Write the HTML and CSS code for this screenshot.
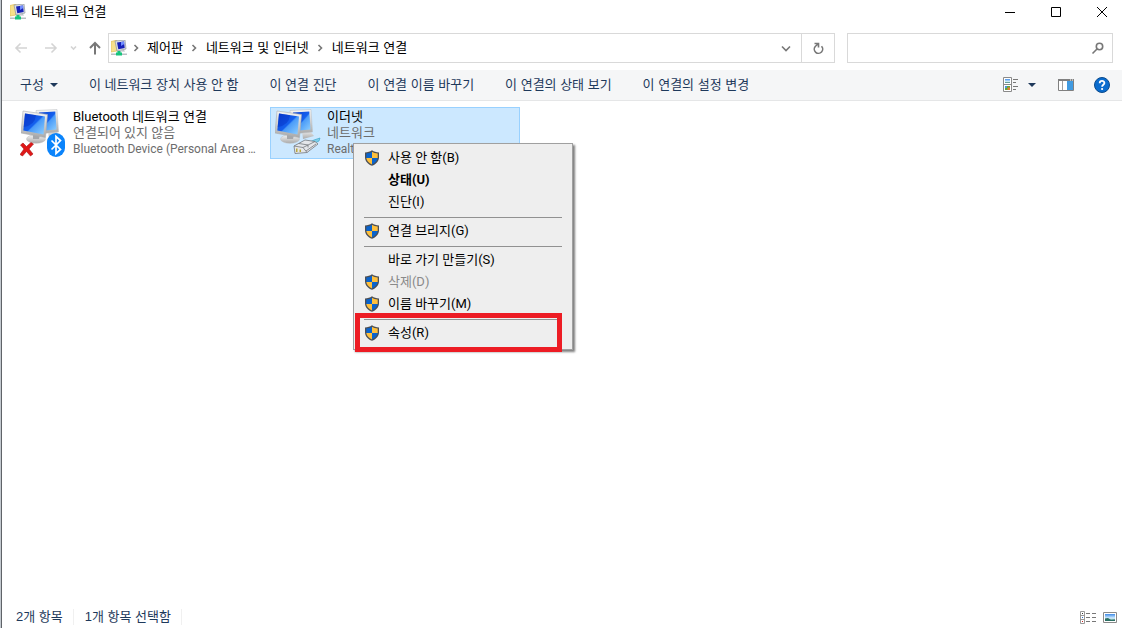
FILE: index.html
```html
<!DOCTYPE html>
<html lang="ko">

<head>
  <meta charset="UTF-8">
  <meta name="viewport" content="width=device-width, initial-scale=1.0">
  <title>네트워크 연결</title>
  <link rel="stylesheet" href="styles.css">
</head>

<body>
  <!-- shared icons -->
  <svg class="defs" aria-hidden="true">
    <defs>
      <linearGradient id="screen" x1="0" y1="0" x2="1" y2="1">
        <stop offset="0" stop-color="#0a3fd0" />
        <stop offset="0.5" stop-color="#1560ee" />
        <stop offset="0.55" stop-color="#4a9bf8" />
        <stop offset="1" stop-color="#8fd0ff" />
      </linearGradient>
      <linearGradient id="metal" x1="0" y1="0" x2="0" y2="1">
        <stop offset="0" stop-color="#f6f6f6" />
        <stop offset="1" stop-color="#a9a9a9" />
      </linearGradient>
      <linearGradient id="sky" x1="0" y1="0" x2="0" y2="1">
        <stop offset="0" stop-color="#3f8be8" />
        <stop offset="0.6" stop-color="#d8f0ff" />
        <stop offset="1" stop-color="#2d7a6a" />
      </linearGradient>
      <symbol id="shield" viewBox="0 0 16 16">
        <path d="M8 .3C6 1.8 3.800 2.300 1 2.500V7.500C1.200 11.500 4 14.200 8 15.800C12 14.200 14.800 11.500 15 7.500V2.500C12.200 2.300 10 1.800 8 .3Z" fill="#4c4f54" />
        <path d="M8 1.800C6.300 2.900 4.500 3.400 2.300 3.600V8H8Z" fill="#0a63cc" />
        <path d="M8 1.800C9.700 2.900 11.500 3.400 13.700 3.600V8H8Z" fill="#ffc03c" />
        <path d="M2.300 8C2.700 11 4.800 13.100 8 14.500V8Z" fill="#ffc03c" />
        <path d="M13.700 8C13.300 11 11.200 13.100 8 14.500V8Z" fill="#0a63cc" />
      </symbol>
      <symbol id="net" viewBox="0 0 16 16">
        <path d="M0 1.500L6 0V11L0 12Z" fill="#f7e08a" stroke="#dcb84c" stroke-width=".6" />
        <path d="M4 1L14 0L15 9L6 11Z" fill="#dcdfe4" stroke="#8d939c" stroke-width=".7" />
        <path d="M6 2.500L13 1.500L13.700 8L7.300 9.200Z" fill="#1620b8" />
        <path d="M10 2L13 1.500L13.300 4L10 6Z" fill="#6f8cff" />
        <path d="M6 11L13 10L14 11.500H6Z" fill="#b7bbc2" />
        <path d="M0 13.500H16V15H0Z" fill="#b9bfc4" />
        <path d="M6.500 11H9.500V12.500H11V15.500H5V12.500H6.500Z" fill="#16c47c" />
      </symbol>
      <symbol id="monitors" viewBox="0 0 40 36">
        <path d="M27 22L34 21L39 27L28 30Z" fill="url(#metal)" />
        <path d="M15 1.500L36 .5L37.500 23L17 25Z" fill="url(#metal)" stroke="#b9bcc0" stroke-width=".5" />
        <path d="M18 3.500L34.300 2.500L35.500 20.500L19 22Z" fill="url(#screen)" />
        <path d="M12 24L22 25V30H13Z" fill="#b8babd" />
        <ellipse cx="15" cy="30" rx="9.500" ry="4.300" fill="url(#metal)" stroke="#bdbdbd" stroke-width=".5" />
        <path d="M12 25L19 26L18 30H12Z" fill="#a5a7aa" />
        <path d="M2 2L26.500 5.500L24.500 28.500L0 24Z" fill="url(#metal)" stroke="#a9acb0" stroke-width=".6" />
        <path d="M4 4.500L24 7.500L22.500 25.500L2.300 21.500Z" fill="url(#screen)" />
        <path d="M4 4.500L15 6.200Q14 16 2.700 18Z" fill="#0634c8" opacity=".5" />
      </symbol>
      <symbol id="crumb" viewBox="0 0 6 8">
        <path d="M1.500 1L4.500 4L1.500 7" fill="none" stroke="#777" stroke-width="1.600" />
      </symbol>
    </defs>
  </svg>

  <div class="window">
    <header class="titlebar">
      <svg class="icon"><use href="#net" /></svg>
      <h1>네트워크 연결</h1>
      <div class="caption-buttons">
        <button type="button" aria-label="최소화">
          <svg viewBox="0 0 12 12"><path d="M1 6.500H11" /></svg>
        </button>
        <button type="button" aria-label="최대화">
          <svg viewBox="0 0 12 12"><path d="M1.500 1.500H10.500V10.500H1.500Z" /></svg>
        </button>
        <button type="button" aria-label="닫기">
          <svg viewBox="0 0 12 12"><path d="M1 1L11 11M11 1L1 11" /></svg>
        </button>
      </div>
    </header>

    <nav class="navbar">
      <div class="history">
        <button type="button" aria-label="뒤로" disabled>
          <svg viewBox="0 0 14 14"><path d="M13 7H2M6.500 2.500L2 7L6.500 11.500" /></svg>
        </button>
        <button type="button" aria-label="앞으로" disabled>
          <svg viewBox="0 0 14 14"><path d="M1 7H12M7.500 2.500L12 7L7.500 11.500" /></svg>
        </button>
        <button type="button" class="recent" aria-label="최근 위치" disabled>
          <svg viewBox="0 0 14 14"><path d="M5 5.500L7.500 8L10 5.500" /></svg>
        </button>
        <button type="button" class="up" aria-label="위로">
          <svg viewBox="0 0 14 14"><path d="M7 13.500V2.500M2 7L7 2L12 7" /></svg>
        </button>
      </div>
      <div class="address">
        <svg class="icon"><use href="#net" /></svg>
        <svg class="crumb"><use href="#crumb" /></svg>
        <a href="#">제어판</a>
        <svg class="crumb"><use href="#crumb" /></svg>
        <a href="#">네트워크 및 인터넷</a>
        <svg class="crumb"><use href="#crumb" /></svg>
        <a href="#">네트워크 연결</a>
        <button type="button" class="drop" aria-label="이전 위치">
          <svg viewBox="0 0 14 14"><path d="M3 5.500L7 9.500L11 5.500" /></svg>
        </button>
        <button type="button" class="refresh" aria-label="새로 고침">
          <svg viewBox="0 0 14 14"><path d="M4.200 5.500A4.200 4.200 0 1 0 10.500 5.200M3.500 2.500H7.500V6.500M7.500 2.500L4.200 5.500" /></svg>
        </button>
      </div>
      <label class="search">
        <input type="text" aria-label="검색">
        <svg viewBox="0 0 14 14"><circle cx="8.500" cy="5.500" r="3.200" /><path d="M6 8L1.500 12.500" /></svg>
      </label>
    </nav>

    <div class="toolbar">
      <button type="button">구성 <svg class="caret" viewBox="0 0 8 4"><path d="M0 0H8L4 4Z" /></svg></button>
      <button type="button">이 네트워크 장치 사용 안 함</button>
      <button type="button">이 연결 진단</button>
      <button type="button">이 연결 이름 바꾸기</button>
      <button type="button">이 연결의 상태 보기</button>
      <button type="button">이 연결의 설정 변경</button>
      <div class="view-tools">
        <button type="button" aria-label="보기 변경">
          <svg class="icon" viewBox="0 0 16 16">
            <path d="M1.500 .5H9.500V14.500H1.500ZM1.500 7.500H9.500" fill="#fff" stroke="#8a8a8a" />
            <path d="M3 2H8V6H3Z" fill="url(#sky)" />
            <path d="M3 9H8V13H3Z" fill="#5fa83c" />
            <path d="M3 9H5V11H3Z" fill="#4a8fe0" />
            <path d="M5.500 10.500H8V13H5.500Z" fill="#e87a30" />
            <path d="M11 2.500H16M11 5.500H14M11 9.500H16M11 12.500H14" stroke="#777" />
          </svg>
        </button>
        <button type="button" class="more" aria-label="추가 옵션">
          <svg class="caret" viewBox="0 0 8 4"><path d="M0 0H8L4 4Z" /></svg>
        </button>
        <button type="button" class="pane" aria-label="미리 보기 창">
          <svg class="icon" viewBox="0 0 16 16">
            <path d="M.5 2.500H15.500V13.500H.5Z" fill="#fff" stroke="#808080" />
            <path d="M0 2H16V4H0Z" fill="#808080" />
            <path d="M4.500 4V13" stroke="#a0a0a0" />
            <path d="M9 4H15V13H9Z" fill="#409ae1" />
            <path d="M12 3H13M14 3H15" stroke="#fff" />
          </svg>
        </button>
        <button type="button" aria-label="도움말">
          <svg class="icon" viewBox="0 0 16 16">
            <circle cx="8" cy="8" r="7.500" fill="#0a6cce" stroke="#0b4a8c" />
            <path d="M5.700 6.200C5.700 3.200 10.400 3.200 10.400 6C10.400 7.700 8.100 7.800 8.100 9.700" fill="none" stroke="#fff" stroke-width="1.800" />
            <circle cx="8.100" cy="12" r="1.100" fill="#fff" />
          </svg>
        </button>
      </div>
    </div>

    <main class="connections">
      <article class="connection">
        <svg class="device" viewBox="0 0 48 48">
          <use href="#monitors" x="1" y="0" width="40" height="36" />
          <path d="M.5 36L3 34L6.500 37.500L11 33.500L13.500 35L9 40L13 45L10.500 47L6.500 42.500L2.500 47L0 45.500L4 40Z" fill="#e01818" stroke="#a81010" stroke-width=".6" />
          <rect x="27" y="24" width="18" height="24" rx="9" fill="#0b84fb" />
          <path d="M31.500 31.500L40.500 40.500L36 44.500V27.500L40.500 31.500L31.500 40.500" fill="none" stroke="#fff" stroke-width="1.700" />
        </svg>
        <div class="details">
          <h2>Bluetooth 네트워크 연결</h2>
          <p>연결되어 있지 않음</p>
          <p class="adapter">Bluetooth Device (Personal Area Network)</p>
        </div>
      </article>

      <article class="connection selected">
        <svg class="device" viewBox="0 0 48 48">
          <use href="#monitors" x="1" y="0" width="40" height="36" />
          <path d="M36 33L40 31L46 29L45 32L41 34Z" fill="#7fd0ea" stroke="#2f9dc4" stroke-width=".6" />
          <path d="M20 37L31 31L41 32.500L44 35L33 43.500L21 44.500Z" fill="#e4e6ea" stroke="#73777c" stroke-width=".8" />
          <path d="M20 37L29 38.500L33 43.500M29 38.500L41 32.500M25 34.500L34 36M32 42L42 35M34 36V38.500" fill="none" stroke="#73777c" stroke-width=".8" />
          <path d="M22 39.500H23.500V43H22ZM25.500 40.500H27V43H25.500Z" fill="#b8a93c" />
        </svg>
        <div class="details">
          <h2>이더넷</h2>
          <p>네트워크</p>
          <p class="adapter">Realtek PCIe GbE Family Controller</p>
        </div>

        <div class="menu" role="menu">
          <button type="button" role="menuitem"><svg class="icon"><use href="#shield" /></svg>사용 안 함(B)</button>
          <button type="button" role="menuitem" class="default">상태(U)</button>
          <button type="button" role="menuitem">진단(I)</button>
          <hr>
          <button type="button" role="menuitem"><svg class="icon"><use href="#shield" /></svg>연결 브리지(G)</button>
          <hr>
          <button type="button" role="menuitem">바로 가기 만들기(S)</button>
          <button type="button" role="menuitem" disabled><svg class="icon"><use href="#shield" /></svg>삭제(D)</button>
          <button type="button" role="menuitem"><svg class="icon"><use href="#shield" /></svg>이름 바꾸기(M)</button>
          <hr>
          <button type="button" role="menuitem" class="marked"><svg class="icon"><use href="#shield" /></svg>속성(R)</button>
        </div>
      </article>
    </main>

    <footer class="statusbar">
      <span>2개 항목</span>
      <span>1개 항목 선택함</span>
      <div class="layouts">
        <button type="button" aria-label="자세히">
          <svg class="icon" viewBox="0 0 16 16">
            <path d="M.5 2.500H4.500V14.500H.5ZM.5 6.500H4.500M.5 10.500H4.500" fill="#fff" stroke="#999" />
            <path d="M2 4.500H3" stroke="#333" />
            <path d="M2 8.500H3" stroke="#2266cc" />
            <path d="M2 12.500H3" stroke="#cc2020" />
            <path d="M6 4.500H10M12 4.500H16M6 8.500H10M12 8.500H16M6 12.500H10M12 12.500H16" stroke="#777" />
          </svg>
        </button>
        <button type="button" aria-label="큰 아이콘">
          <svg class="icon" viewBox="0 0 16 16">
            <path d="M1.500 3.500H14.500V13.500H1.500Z" fill="#fff" stroke="#8a8a8a" />
            <path d="M3 5H13V12H3Z" fill="url(#sky)" />
            <path d="M3 12V9.500L6 9L9 11L13 10.500V12Z" fill="#2b6f63" />
          </svg>
        </button>
      </div>
    </footer>
  </div>
</body>

</html>
```
FILE: styles.css
```css
* {
  margin: 0;
  padding: 0;
  box-sizing: border-box;
}

body {
  font-family: 'Liberation Sans', 'Noto Sans CJK KR', sans-serif;
  font-size: 13px;
  line-height: 16px;
  color: #000;
  background: #fff;
}

button,
input {
  font: inherit;
  color: inherit;
  background: none;
  border: none;
}

button {
  display: flex;
  align-items: center;
  white-space: nowrap;
}

a {
  color: inherit;
  text-decoration: none;
}

svg {
  display: block;
  flex: none;
}

.defs {
  position: absolute;
  width: 0;
  height: 0;
}

.icon {
  width: 16px;
  height: 16px;
}

.window {
  display: flex;
  flex-direction: column;
  min-height: 100vh;
  padding-left: 2px;
  background: linear-gradient(to right, #c3c9cf 1px, #5f6368 1px, #5f6368 2px, #fff 2px);
}

/* Title bar */

.titlebar {
  display: flex;
  align-items: center;
  height: 24px;
  padding-left: 8px;
  gap: 5px;
}

.titlebar h1 {
  font-size: 13px;
  font-weight: normal;
}

.caption-buttons {
  display: flex;
  margin-left: auto;
  gap: 6px;
}

.caption-buttons button {
  width: 40px;
  height: 24px;
  justify-content: center;
}

.caption-buttons svg {
  width: 12px;
  height: 12px;
  fill: none;
  stroke: #000;
}

/* Navigation */

.navbar {
  display: flex;
  align-items: center;
  height: 46px;
  padding: 1px 9px 0 12px;
}

.navbar svg {
  fill: none;
}

.history {
  display: flex;
  width: 94px;
  gap: 16px;
}

.history svg,
.address button svg,
.search svg {
  width: 14px;
  height: 14px;
  stroke: #777;
  stroke-width: 1.6;
}

.history button:disabled svg {
  stroke: #d4d4d4;
}

.history .recent {
  margin: 0 -8px;
}

.history .up svg {
  stroke-width: 2;
}

.address {
  display: flex;
  flex: 1;
  align-items: center;
  height: 30px;
  border: 1px solid #d9d9d9;
  padding-left: 2px;
  margin-right: 12px;
}

.address a {
  white-space: nowrap;
}

.crumb {
  width: 6px;
  height: 8px;
  margin: 0 9px 0 8px;
}

.icon + .crumb {
  margin: 0 8px 0 6px;
}

.address .drop {
  margin-left: auto;
  padding: 0 8px;
}

.address .refresh {
  width: 33px;
  height: 28px;
  justify-content: center;
  border-left: 1px solid #d9d9d9;
}

.search {
  display: flex;
  align-items: center;
  width: 266px;
  height: 30px;
  border: 1px solid #d9d9d9;
  padding: 0 7px;
}

.search input {
  flex: 1;
  min-width: 0;
  outline: none;
}

/* Command bar */

.toolbar {
  display: flex;
  align-items: center;
  height: 31px;
  padding: 0 12px 0 18px;
  gap: 31px;
  color: #1e395b;
  background: #f5f6f7;
  border-bottom: 1px solid #e5e6e7;
}

.caret {
  width: 8px;
  height: 4px;
  margin-left: 6px;
  fill: #1e395b;
}

.view-tools {
  display: flex;
  align-items: center;
  margin-left: auto;
}

.view-tools .more {
  margin: 0 22px 0 4px;
}

.view-tools .pane {
  margin-right: 20px;
}

/* Connection tiles */

.connections {
  display: flex;
  flex: 1;
  align-items: flex-start;
  gap: 4px;
  padding: 6px 14px;
}

.connection {
  position: relative;
  display: flex;
  width: 250px;
  height: 52px;
  padding: 1px 6px 1px 3px;
  gap: 5px;
  border: 1px solid transparent;
}

.connection.selected {
  background: #cce8ff;
  border-color: #99d1ff;
}

.device {
  width: 48px;
  height: 48px;
}

.details {
  flex: 1;
  min-width: 0;
  font-family: Roboto, 'Noto Sans CJK KR', sans-serif;
}

.details h2 {
  font-size: 13px;
  font-weight: normal;
}

.details p {
  color: #6d6d6d;
}

.details .adapter {
  overflow: hidden;
  font-size: 12px;
  white-space: nowrap;
  text-overflow: ellipsis;
}

/* Context menu */

.menu {
  position: absolute;
  top: 35px;
  left: 82px;
  z-index: 1;
  width: 220px;
  padding: 3px 0 5px;
  font-family: Roboto, 'Noto Sans CJK KR', sans-serif;
  background: #eee;
  border: 1px solid #a0a0a0;
  box-shadow: 2px 2px 2px rgba(0, 0, 0, 0.5);
}

.menu button {
  position: relative;
  width: 100%;
  height: 22px;
  padding-left: 34px;
}

.menu .icon {
  margin: 0 8px 0 -24px;
}

.menu button:disabled {
  color: #8a8a8a;
}

.menu .default {
  font-weight: bold;
}

.menu hr {
  margin: 4px 10px 2px;
  border: none;
  border-top: 1px solid #919191;
}

.marked::after {
  content: '';
  position: absolute;
  top: -9px;
  right: 10px;
  bottom: -8px;
  left: 1px;
  border: 5px solid #ed1c24;
}

/* Status bar */

.statusbar {
  display: flex;
  align-items: center;
  height: 22px;
  padding: 0 4px 0 14px;
  color: #1e395b;
}

.statusbar span {
  padding-right: 10px;
  margin-right: 11px;
  border-right: 1px solid #f0f0f0;
}

.layouts {
  display: flex;
  gap: 6px;
  margin-left: auto;
}
```
